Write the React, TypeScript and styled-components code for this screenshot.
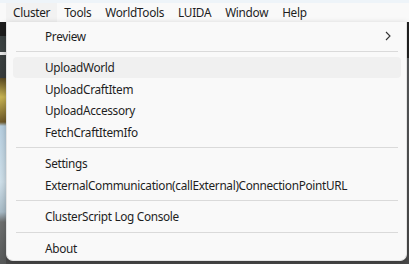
import React from "react";
import styled, { createGlobalStyle } from "styled-components";

const GlobalStyle = createGlobalStyle`
  html, body { margin: 0; padding: 0; }
  body {
    font-family: "Noto Sans", "Open Sans", sans-serif;
    color: #1e1e1e;
    -webkit-font-smoothing: antialiased;
  }
`;

const Window = styled.div`
  width: 409px;
  height: 264px;
  overflow: hidden;
  display: flex;
  flex-direction: column;
  background: #f9f9f9;
`;

const TopStrip = styled.div`
  height: 3px;
  background: #eef4f9;
`;

const MenuBar = styled.div`
  height: 19px;
  display: flex;
  align-items: stretch;
  padding-left: 6px;
  background: #f9f9f9;
`;

const MenuBarItem = styled.div<{ $active?: boolean }>`
  display: flex;
  align-items: center;
  padding: 0 7px 1px;
  font-size: 11.8px;
  letter-spacing: -0.3px;
  background: ${(p) => (p.$active ? "#f2f2f2" : "transparent")};
`;

const Stage = styled.div`
  flex: 1;
  position: relative;
  background:
    linear-gradient(
        to bottom,
        #1d1d1d 0px,
        #1d1d1d 14px,
        #3a4141 14px,
        #3e4444 30px,
        #e8e8e8 30px,
        #e8e8e8 33px,
        #3b4040 33px,
        #383d3d 56px,
        #5a4a22 56px,
        #c9b553 75px,
        #6f5a2a 100px,
        #b7cfe0 104px,
        #cfe0ea 160px,
        #a9bcc8 190px,
        #6e7070 200px,
        #575959 242px
      )
      left top / 6px 100% no-repeat,
    linear-gradient(to bottom, #222 0px, #222 36px, #5c5e60 36px, #4b4b4b 242px);
`;

const Dropdown = styled.div`
  position: absolute;
  left: 6px;
  top: 0;
  width: 401px;
  height: 239px;
  box-sizing: border-box;
  padding: 3px 5px 0 6px;
  background: #f9f9f9;
  border: 1px solid #e3e3e3;
  border-top: none;
  border-radius: 0 0 7px 7px;
  box-shadow: 0 2px 6px rgba(0, 0, 0, 0.25);
  display: flex;
  flex-direction: column;
`;

const Item = styled.div<{ $hover?: boolean }>`
  height: 21.5px;
  flex: none;
  display: flex;
  align-items: center;
  justify-content: space-between;
  padding: 0 10px 0 32px;
  font-size: 11.8px;
  letter-spacing: -0.32px;
  border-radius: 4px;
  background: ${(p) => (p.$hover ? "#f0f0f0" : "transparent")};
  white-space: nowrap;
`;

const Separator = styled.div`
  height: 10px;
  flex: none;
  display: flex;
  align-items: center;
  padding: 0 3px 0 3px;
  &::after {
    content: "";
    flex: 1;
    height: 1px;
    background: #dadada;
  }
`;

const Chevron = () => (
  <svg width="6" height="10" viewBox="0 0 6 10">
    <polyline
      points="1,1 5,5 1,9"
      fill="none"
      stroke="#333"
      strokeWidth="1.1"
    />
  </svg>
);

type Entry = { label?: string; sep?: boolean; sub?: boolean; hover?: boolean };

const entries: Entry[] = [
  { label: "Preview", sub: true },
  { sep: true },
  { label: "UploadWorld", hover: true },
  { label: "UploadCraftItem" },
  { label: "UploadAccessory" },
  { label: "FetchCraftItemIfo" },
  { sep: true },
  { label: "Settings" },
  { label: "ExternalCommunication(callExternal)ConnectionPointURL" },
  { sep: true },
  { label: "ClusterScript Log Console" },
  { sep: true },
  { label: "About" },
];

const menus = ["Cluster", "Tools", "WorldTools", "LUIDA", "Window", "Help"];

export default function App() {
  return (
    <>
      <GlobalStyle />
      <Window>
        <TopStrip />
        <MenuBar>
          {menus.map((m, i) => (
            <MenuBarItem key={m} $active={i === 0}>
              {m}
            </MenuBarItem>
          ))}
        </MenuBar>
        <Stage>
          <Dropdown>
            {entries.map((e, i) =>
              e.sep ? (
                <Separator key={i} />
              ) : (
                <Item key={i} $hover={e.hover}>
                  <span>{e.label}</span>
                  {e.sub && <Chevron />}
                </Item>
              )
            )}
          </Dropdown>
        </Stage>
      </Window>
    </>
  );
}
